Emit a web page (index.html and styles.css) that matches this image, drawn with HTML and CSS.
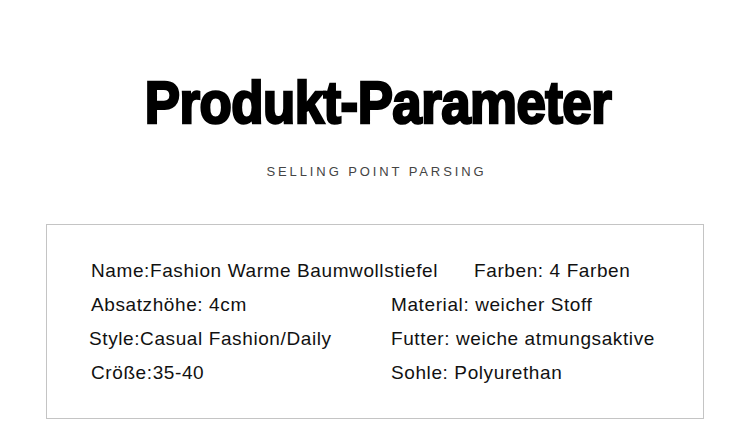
FILE: index.html
```html
<!DOCTYPE html>
<html lang="de">
<head>
<meta charset="utf-8">
<title>Produkt-Parameter</title>
<link rel="stylesheet" href="styles.css">
</head>
<body>
<main class="page">
  <header class="header">
    <h1 class="title">Produkt-Parameter</h1>
    <p class="subtitle">SELLING POINT PARSING</p>
  </header>
  <section class="specs">
    <div class="spec-row spec-row--first">
      <span class="spec">Name:Fashion Warme Baumwollstiefel</span>
      <span class="spec">Farben: 4 Farben</span>
    </div>
    <div class="spec-row">
      <span class="spec">Absatzhöhe: 4cm</span>
      <span class="spec">Material: weicher Stoff</span>
    </div>
    <div class="spec-row">
      <span class="spec spec--nudge">Style:Casual Fashion/Daily</span>
      <span class="spec">Futter: weiche atmungsaktive</span>
    </div>
    <div class="spec-row">
      <span class="spec">Cröße:35-40</span>
      <span class="spec">Sohle: Polyurethan</span>
    </div>
  </section>
</main>
</body>
</html>
```
FILE: styles.css
```css
html, body {
  margin: 0;
  padding: 0;
  background: #ffffff;
}

.page {
  width: 750px;
  height: 439px;
  font-family: "Liberation Sans", Arial, sans-serif;
  color: #111111;
}

.header {
  padding-top: 73px;
  display: flex;
  flex-direction: column;
  align-items: center;
}

.title {
  margin: 0 0 0 6px;
  font-family: "Liberation Sans", Arial, sans-serif;
  font-weight: 700;
  font-size: 60px;
  line-height: 60px;
  color: #000;
  -webkit-text-stroke: 2.6px #000;
  letter-spacing: -0.6px;
  transform: scaleX(0.88);
  white-space: nowrap;
}

.subtitle {
  margin: 31px 0 0 0;
  font-size: 13px;
  line-height: 16px;
  letter-spacing: 2.9px;
  color: #444444;
  padding-left: 3px;
}

.specs {
  margin: 44px 0 0 46px;
  border: 1px solid #c4c4c4;
  padding: 29px 0 0 44px;
  box-sizing: border-box;
  width: 658px;
  height: 195px;
  display: flex;
  flex-direction: column;
}

.spec-row {
  display: grid;
  grid-template-columns: 300px 1fr;
  height: 34px;
  line-height: 34px;
  font-size: 19px;
  letter-spacing: 0.6px;
}

.spec-row--first {
  display: flex;
  gap: 36px;
}

.spec {
  white-space: nowrap;
}

.spec--nudge {
  margin-left: -2px;
}
```
